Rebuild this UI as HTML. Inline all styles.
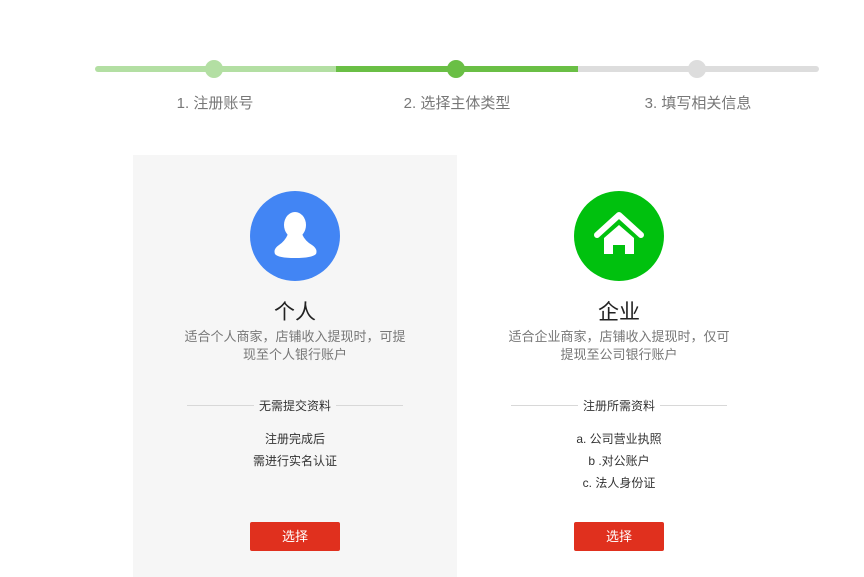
<!DOCTYPE html><html><head><meta charset="utf-8"><style>
body{margin:0;width:864px;height:577px;background:#fff;font-family:"Liberation Sans","Noto Sans CJK SC",sans-serif;position:relative;overflow:hidden}
.seg{position:absolute;top:66px;height:6px}
.dot{position:absolute;top:60px;width:18px;height:18px;border-radius:50%}
.lbl{position:absolute;top:92px;width:200px;text-align:center;font-size:15px;color:#777}
.card{position:absolute;top:155px;width:324px;height:422px}
.c{position:absolute;left:0;width:324px;text-align:center}
.circ{position:absolute;left:117px;top:36px;width:90px;height:90px;border-radius:50%}
.t{top:141px;font-size:21px;color:#222}
.d{top:173px;font-size:13px;line-height:18px;color:#777;left:49px;width:226px}
.hr{position:absolute;top:250px;left:54px;width:216px;height:1px;background:#d8d8d8}
.hl{top:242px;font-size:12px;color:#333}
.hl span{padding:0 5px}
.l{top:273px;font-size:12px;line-height:22px;color:#333}
.btn{position:absolute;left:117px;top:367px;width:90px;height:29px;background:#e0301e;color:#fff;font-size:13px;line-height:29px;text-align:center;border-radius:2px}
</style></head><body>
<div class="seg" style="left:95px;width:241px;background:#b3dfa3;border-radius:3px 0 0 3px"></div>
<div class="seg" style="left:336px;width:242px;background:#6abf45"></div>
<div class="seg" style="left:578px;width:241px;background:#ddd;border-radius:0 3px 3px 0"></div>
<div class="dot" style="left:205px;background:#b3dfa3"></div>
<div class="dot" style="left:447px;background:#6abf45"></div>
<div class="dot" style="left:688px;background:#ddd"></div>
<div class="lbl" style="left:115px">1. 注册账号</div>
<div class="lbl" style="left:357px">2. 选择主体类型</div>
<div class="lbl" style="left:598px">3. 填写相关信息</div>

<div class="card" style="left:133px;background:#f6f6f6">
<div class="circ" style="background:#4285f4"><svg width="90" height="90" viewBox="0 0 90 90"><ellipse cx="45" cy="34" rx="11" ry="13" fill="#fff"/><path d="M38 43 L52 43 Q55 50 62 54 Q68 58 66 63 Q62 67 45 67 Q28 67 25 63 Q23 58 29 54 Q35 50 38 43Z" fill="#fff"/></svg></div>
<div class="c t">个人</div>
<div class="c d">适合个人商家，店铺收入提现时，可提现至个人银行账户</div>
<div class="hr"></div><div class="c hl"><span style="background:#f6f6f6">无需提交资料</span></div>
<div class="c l">注册完成后<br>需进行实名认证</div>
<div class="btn">选择</div>
</div>

<div class="card" style="left:457px;background:#fff">
<div class="circ" style="background:#00c10e"><svg width="90" height="90" viewBox="0 0 90 90"><path d="M23 44 L45 24 L67 44" fill="none" stroke="#fff" stroke-width="6" stroke-linecap="round" stroke-linejoin="round"/><path d="M30 47 L45 34 L60 47 L60 63 L51 63 L51 54 L39 54 L39 63 L30 63Z" fill="#fff"/></svg></div>
<div class="c t">企业</div>
<div class="c d">适合企业商家，店铺收入提现时，仅可提现至公司银行账户</div>
<div class="hr"></div><div class="c hl"><span style="background:#fff">注册所需资料</span></div>
<div class="c l">a. 公司营业执照<br>b .对公账户<br>c. 法人身份证</div>
<div class="btn">选择</div>
</div>
</body></html>
